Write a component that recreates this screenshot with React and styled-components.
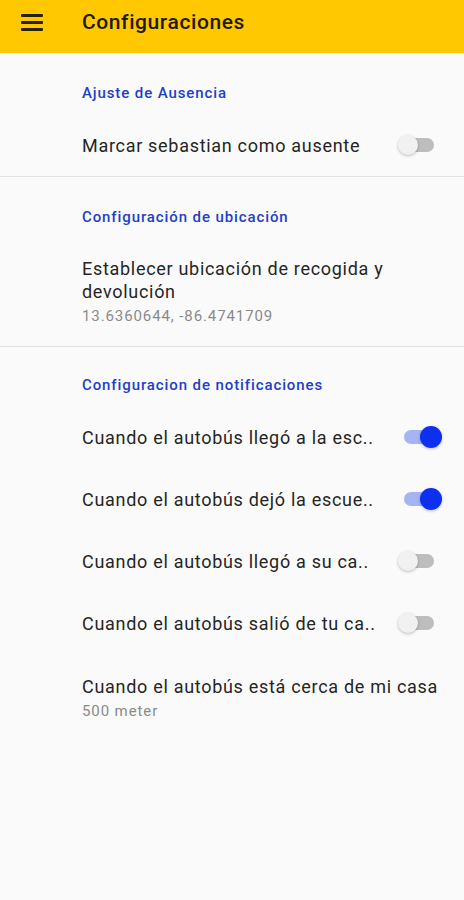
import React from "react";
import styled, { createGlobalStyle } from "styled-components";

const GlobalStyle = createGlobalStyle`
  html, body {
    margin: 0;
    padding: 0;
    background: #fafafa;
  }
  body {
    font-family: Roboto, "Noto Sans", "Liberation Sans", sans-serif;
  }
`;

const notifications = [
  { label: "Cuando el autobús llegó a la esc..", on: true },
  { label: "Cuando el autobús dejó la escue..", on: true },
  { label: "Cuando el autobús llegó a su ca..", on: false },
  { label: "Cuando el autobús salió de tu ca..", on: false },
];

const Switch = ({ on }) => (
  <SwitchWrap>
    <Track on={on ? 1 : 0} />
    <Thumb on={on ? 1 : 0} />
  </SwitchWrap>
);

const App = () => {
  return (
    <Page>
      <GlobalStyle />
      <Toolbar>
        <MenuButton aria-label="menu">
          <span />
          <span />
          <span />
        </MenuButton>
        <Title>Configuraciones</Title>
      </Toolbar>

      <Section>
        <SectionTitle>Ajuste de Ausencia</SectionTitle>
        <Row>
          <Label>Marcar sebastian como ausente</Label>
          <Switch on={false} />
        </Row>
      </Section>

      <Section>
        <SectionTitle>Configuración de ubicación</SectionTitle>
        <TwoLineRow>
          <Label>Establecer ubicación de recogida y devolución</Label>
          <Summary>13.6360644, -86.4741709</Summary>
        </TwoLineRow>
      </Section>

      <Section last>
        <SectionTitle>Configuracion de notificaciones</SectionTitle>
        {notifications.map((n) => (
          <Row key={n.label}>
            <Label>{n.label}</Label>
            <Switch on={n.on} />
          </Row>
        ))}
        <TwoLineRow tight>
          <Label>Cuando el autobús está cerca de mi casa</Label>
          <Summary>500 meter</Summary>
        </TwoLineRow>
      </Section>
    </Page>
  );
};

const Page = styled.div`
  width: 464px;
  min-height: 900px;
  background: #fafafa;
`;

const Toolbar = styled.header`
  height: 53px;
  background: #ffc800;
  display: flex;
  align-items: center;
  padding: 0 0 0 21px;
  box-sizing: border-box;
`;

const MenuButton = styled.div`
  width: 22px;
  display: flex;
  flex-direction: column;
  gap: 4px;
  margin-right: 39px;
  margin-top: -9px;

  span {
    display: block;
    height: 3px;
    background: #2a2200;
    border-radius: 1px;
  }
`;

const Title = styled.h1`
  margin: -9px 0 0 0;
  font-size: 21px;
  font-weight: 500;
  color: #1c1a12;
  letter-spacing: 0.6px;
`;

const Section = styled.section`
  padding-top: ${({ last }) => (last ? "28px" : "30px")};
  border-bottom: ${({ last }) => (last ? "none" : "1px solid #e2e2e2")};
`;

const SectionTitle = styled.h2`
  margin: 0 0 11px 82px;
  font-size: 15px;
  line-height: 20px;
  font-weight: 500;
  color: #1f3fc6;
  letter-spacing: 0.9px;
`;

const Row = styled.div`
  height: 62px;
  display: flex;
  align-items: center;
  justify-content: space-between;
  padding: 0 30px 0 82px;
`;

const TwoLineRow = styled.div`
  padding: ${({ tight }) => (tight ? "21px 8px 19px 82px" : "19px 40px 19px 82px")};
`;

const Label = styled.div`
  font-size: 18px;
  line-height: 23px;
  color: #252525;
  letter-spacing: 0.7px;
  white-space: ${({ children }) => (String(children).length > 40 ? "normal" : "nowrap")};
`;

const Summary = styled.div`
  margin-top: 2px;
  font-size: 15px;
  line-height: 22px;
  color: #8a8a8a;
  letter-spacing: 0.9px;
`;

const SwitchWrap = styled.div`
  position: relative;
  width: 36px;
  height: 22px;
  flex-shrink: 0;
`;

const Track = styled.div`
  position: absolute;
  left: 6px;
  top: 4px;
  width: 30px;
  height: 14px;
  border-radius: 7px;
  background: ${({ on }) => (on ? "#a6b4f4" : "#bdbdbd")};
`;

const Thumb = styled.div`
  position: absolute;
  top: 0;
  left: ${({ on }) => (on ? "22px" : "0")};
  width: ${({ on }) => (on ? "22px" : "20px")};
  height: ${({ on }) => (on ? "22px" : "20px")};
  margin-top: ${({ on }) => (on ? "0" : "1px")};
  border-radius: 50%;
  background: ${({ on }) => (on ? "#0d30f0" : "#f1f1f1")};
  box-shadow: 0 1px 3px rgba(0, 0, 0, 0.25);
`;

export default App;
